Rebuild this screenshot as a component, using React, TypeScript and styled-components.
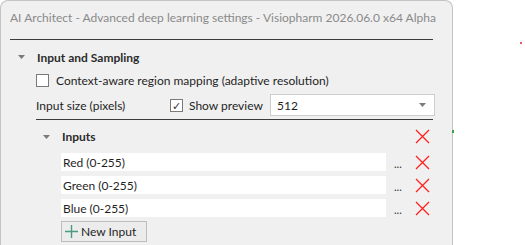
import React from 'react';
import styled, { createGlobalStyle } from 'styled-components';

const GlobalStyle = createGlobalStyle`
  html, body {
    margin: 0;
    padding: 0;
    background: #ffffff;
    overflow: hidden;
  }
  body {
    font-family: Lato, 'Open Sans', sans-serif;
    font-size: 12px;
    color: #1f1f1f;
  }
`;

const inputs = ['Red (0-255)', 'Green (0-255)', 'Blue (0-255)'];

const Cross = () => (
  <svg width="15" height="15" viewBox="0 0 15 15">
    <path d="M1 1 L14 14 M14 1 L1 14" stroke="#ff2020" strokeWidth="1.3" fill="none" />
  </svg>
);

const Caret = () => (
  <svg width="7" height="4" viewBox="0 0 7 4">
    <path d="M0 0 L7 0 L3.5 4 Z" fill="#7a7a7a" />
  </svg>
);

const PlusIcon = () => (
  <svg width="13" height="13" viewBox="0 0 13 13">
    <path d="M6.5 0 V13 M0 6.5 H13" stroke="#4a9a7c" strokeWidth="1.4" fill="none" />
  </svg>
);

const App: React.FC = () => (
  <>
    <GlobalStyle />
    <Page>
      <Window>
        <TitleBar>AI Architect - Advanced deep learning settings - Visiopharm 2026.06.0 x64 Alpha</TitleBar>
        <Divider />
        <Body>
          <SectionHeader>
            <Expander>
              <Caret />
            </Expander>
            <SectionTitle>Input and Sampling</SectionTitle>
          </SectionHeader>
          <Indented>
            <CheckRow>
              <CheckBox />
              <span>Context-aware region mapping (adaptive resolution)</span>
            </CheckRow>
            <SizeRow>
              <SizeLabel>Input size (pixels)</SizeLabel>
              <CheckBox $checked>✓</CheckBox>
              <PreviewLabel>Show preview</PreviewLabel>
              <Combo>
                <span>512</span>
                <Caret />
              </Combo>
            </SizeRow>
            <Divider $inner />
            <SectionHeader $sub>
              <Expander>
                <Caret />
              </Expander>
              <SectionTitle>Inputs</SectionTitle>
              <Spacer />
              <RemoveButton>
                <Cross />
              </RemoveButton>
            </SectionHeader>
            <InputList>
              {inputs.map((name) => (
                <InputRow key={name}>
                  <TextField>{name}</TextField>
                  <Ellipsis>...</Ellipsis>
                  <RemoveButton>
                    <Cross />
                  </RemoveButton>
                </InputRow>
              ))}
              <NewButton>
                <PlusIcon />
                New Input
              </NewButton>
            </InputList>
          </Indented>
        </Body>
        <EdgeMark />
      </Window>
      <Dot />
    </Page>
  </>
);

export default App;

const Page = styled.div`
  position: relative;
  width: 525px;
  height: 245px;
  overflow: hidden;
`;

const Window = styled.div`
  position: relative;
  box-sizing: border-box;
  width: 453px;
  height: 270px;
  background: #f0f0f0;
  border: 1px solid #c4c4c4;
  border-bottom: none;
  border-radius: 8px 8px 0 0;
  display: flex;
  flex-direction: column;
`;

const TitleBar = styled.div`
  height: 32px;
  padding: 0 0 0 9px;
  box-sizing: border-box;
  display: flex;
  align-items: center;
  font-size: 12px;
  color: #8a8a8a;
  white-space: nowrap;
`;

const Divider = styled.div<{ $inner?: boolean }>`
  height: 1px;
  background: #3c3c3c;
  margin: ${(p) => (p.$inner ? '1px 19px 0 0' : '6px 19px 0 9px')};
`;

const Body = styled.div`
  display: flex;
  flex-direction: column;
  padding: 6px 0 0 0;
`;

const SectionHeader = styled.div<{ $sub?: boolean }>`
  display: flex;
  align-items: center;
  height: ${(p) => (p.$sub ? '33px' : '22px')};
  padding-left: ${(p) => (p.$sub ? '7px' : '17px')};
  padding-right: ${(p) => (p.$sub ? '22px' : '0')};
`;

const Expander = styled.div`
  width: 19px;
  display: flex;
  align-items: center;
`;

const SectionTitle = styled.div`
  font-weight: 700;
  font-size: 12px;
  color: #2b2b2b;
`;

const Spacer = styled.div`
  flex: 1;
`;

const Indented = styled.div`
  display: flex;
  flex-direction: column;
  padding-left: 35px;
`;

const CheckRow = styled.div`
  display: flex;
  align-items: center;
  height: 24px;
  gap: 7px;
`;

const CheckBox = styled.div<{ $checked?: boolean }>`
  box-sizing: border-box;
  width: 13px;
  height: 13px;
  border: 1px solid #7a7a7a;
  background: #ffffff;
  font-size: 11px;
  line-height: 11px;
  text-align: center;
  color: #333;
`;

const SizeRow = styled.div`
  display: flex;
  align-items: center;
  height: 26px;
`;

const SizeLabel = styled.div`
  width: 134px;
`;

const PreviewLabel = styled.div`
  margin-left: 6px;
  width: 81px;
`;

const Combo = styled.div`
  box-sizing: border-box;
  width: 165px;
  height: 22px;
  border: 1px solid #cdcdcd;
  background: #ffffff;
  display: flex;
  align-items: center;
  justify-content: space-between;
  padding: 0 8px 0 6px;
`;

const RemoveButton = styled.div`
  width: 15px;
  height: 15px;
  display: flex;
`;

const InputList = styled.div`
  display: flex;
  flex-direction: column;
  gap: 5px;
  padding-left: 25px;
`;

const InputRow = styled.div`
  display: flex;
  align-items: center;
  height: 18px;
`;

const TextField = styled.div`
  box-sizing: border-box;
  width: 325px;
  height: 18px;
  background: #ffffff;
  padding-left: 2px;
  display: flex;
  align-items: center;
`;

const Ellipsis = styled.div`
  width: 29px;
  padding-left: 8px;
  box-sizing: border-box;
  font-size: 11px;
  color: #333;
  align-self: flex-end;
  line-height: 14px;
`;

const NewButton = styled.div`
  box-sizing: border-box;
  width: 86px;
  height: 21px;
  margin-top: -1px;
  border: 1px solid #bdbdbd;
  background: #ececec;
  display: flex;
  align-items: center;
  padding-left: 3px;
  gap: 3px;
`;

const EdgeMark = styled.div`
  position: absolute;
  right: -2px;
  top: 129px;
  width: 2px;
  height: 3px;
  background: #3aa04a;
`;

const Dot = styled.div`
  position: absolute;
  left: 520px;
  top: 42px;
  width: 2px;
  height: 2px;
  background: #e02020;
  border-radius: 1px;
`;
